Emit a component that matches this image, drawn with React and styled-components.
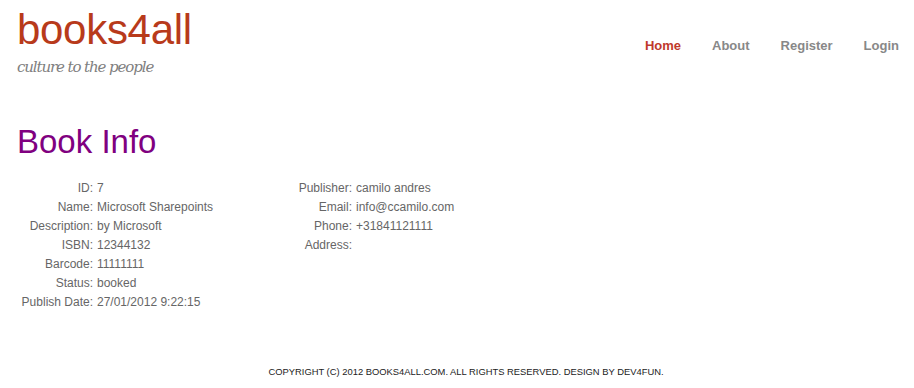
import React from 'react';
import styled, { createGlobalStyle } from 'styled-components';

const GlobalStyle = createGlobalStyle`
  html, body {
    margin: 0;
    padding: 0;
    background: #fff;
  }

  body {
    font-family: "Liberation Sans", Arial, sans-serif;
    color: #666;
  }
`;

const Page = styled.div`
  width: 914px;
  min-height: 388px;
  display: flex;
  flex-direction: column;
`;

const Header = styled.header`
  display: flex;
  justify-content: space-between;
  align-items: flex-start;
  padding: 0 15px 0 17px;
  height: 100px;
`;

const Brand = styled.div`
  display: flex;
  flex-direction: column;
`;

const Logo = styled.a`
  font-size: 42px;
  line-height: 48px;
  margin-top: 6px;
  color: #b83a1b;
  text-decoration: none;
  letter-spacing: -0.3px;
`;

const Tagline = styled.span`
  font-family: "DejaVu Serif", Georgia, serif;
  font-style: italic;
  font-size: 15px;
  letter-spacing: -1.1px;
  color: #808080;
  margin-top: 4px;
`;

const Nav = styled.nav`
  display: flex;
  gap: 31px;
  margin-top: 38px;
`;

const NavLink = styled.a`
  font-size: 13px;
  font-weight: bold;
  text-decoration: none;
  color: ${(p) => (p.$active ? '#c0392b' : '#888')};
`;

const Main = styled.main`
  padding: 0 17px;
  flex: 1;
`;

const Title = styled.h1`
  margin: 22px 0 17px;
  font-size: 33px;
  font-weight: normal;
  line-height: 40px;
  color: #800080;
`;

const Columns = styled.div`
  display: flex;
  align-items: flex-start;
`;

const InfoTable = styled.div`
  display: grid;
  grid-template-columns: ${(p) => p.$labelWidth}px auto;
  column-gap: 4px;
  width: ${(p) => p.$width}px;
  font-size: 12px;
  line-height: 19px;
`;

const Label = styled.span`
  text-align: right;
`;

const Value = styled.span``;

const Footer = styled.footer`
  text-align: center;
  font-size: 9.4px;
  color: #222;
  padding: 0 0 10px 18px;
  line-height: 12px;
`;

const leftRows = [
  ['ID', '7'],
  ['Name', 'Microsoft Sharepoints'],
  ['Description', 'by Microsoft'],
  ['ISBN', '12344132'],
  ['Barcode', '11111111'],
  ['Status', 'booked'],
  ['Publish Date', '27/01/2012 9:22:15'],
];

const rightRows = [
  ['Publisher', 'camilo andres'],
  ['Email', 'info@ccamilo.com'],
  ['Phone', '+31841121111'],
  ['Address', ''],
];

const App = () => (
  <Page>
    <GlobalStyle />
    <Header>
      <Brand>
        <Logo href="#">books4all</Logo>
        <Tagline>culture to the people</Tagline>
      </Brand>
      <Nav>
        <NavLink href="#" $active>Home</NavLink>
        <NavLink href="#">About</NavLink>
        <NavLink href="#">Register</NavLink>
        <NavLink href="#">Login</NavLink>
      </Nav>
    </Header>
    <Main>
      <Title>Book Info</Title>
      <Columns>
        <InfoTable $labelWidth={76} $width={278}>
          {leftRows.map(([k, v]) => (
            <React.Fragment key={k}>
              <Label>{k}:</Label>
              <Value>{v}</Value>
            </React.Fragment>
          ))}
        </InfoTable>
        <InfoTable $labelWidth={57} $width={300}>
          {rightRows.map(([k, v]) => (
            <React.Fragment key={k}>
              <Label>{k}:</Label>
              <Value>{v}</Value>
            </React.Fragment>
          ))}
        </InfoTable>
      </Columns>
    </Main>
    <Footer>COPYRIGHT (C) 2012 BOOKS4ALL.COM. ALL RIGHTS RESERVED. DESIGN BY DEV4FUN.</Footer>
  </Page>
);

export default App;
